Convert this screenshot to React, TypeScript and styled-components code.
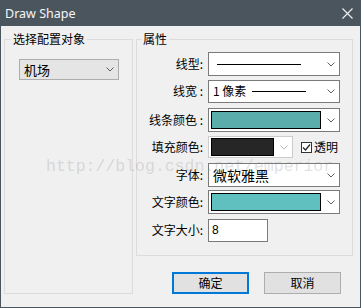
import React from "react";
import styled, { createGlobalStyle } from "styled-components";

const GlobalStyle = createGlobalStyle`
  html, body {
    margin: 0;
    padding: 0;
    background: #f0f0f0;
  }
  * {
    box-sizing: border-box;
  }
`;

const Window = styled.div`
  position: relative;
  width: 361px;
  height: 308px;
  background: #f0f0f0;
  border: 1px solid #4b555e;
  border-top: none;
  display: flex;
  flex-direction: column;
  font-family: "Noto Sans CJK SC", "Noto Sans", sans-serif;
  font-size: 12px;
  color: #000;
  overflow: hidden;
`;

const TitleBar = styled.div`
  height: 26px;
  flex: none;
  margin: 0 -1px;
  background: #4b555e;
  display: flex;
  align-items: center;
  justify-content: space-between;
  padding: 0 8px 0 5px;
  color: #f4f6f8;
  font-family: "Noto Sans", "Open Sans", sans-serif;
  font-size: 12.5px;
`;

const Body = styled.div`
  flex: 1;
  display: grid;
  grid-template-columns: 129px 217px;
  column-gap: 3px;
  align-items: start;
  padding: 5px 7px 0 3px;
`;

const Group = styled.fieldset<{ $height: number }>`
  margin: 0;
  padding: 0;
  min-width: 0;
  height: ${(p) => p.$height}px;
  border: 1px solid #dcdcdc;
`;

const Legend = styled.legend<{ $offset: number }>`
  margin-left: ${(p) => p.$offset}px;
  padding: 0 2px;
  font-size: 12px;
  line-height: 16px;
`;

const LeftContent = styled.div`
  padding: 12px 0 0 14px;
`;

const RightColumn = styled.div`
  display: flex;
  flex-direction: column;
`;

const Form = styled.div`
  display: flex;
  flex-direction: column;
  padding-top: 5px;
`;

const Row = styled.div<{ $gap?: number }>`
  display: grid;
  grid-template-columns: 66px auto auto;
  column-gap: 5px;
  align-items: center;
  justify-content: start;
  height: 24px;
  margin-top: ${(p) => p.$gap ?? 0}px;
`;

const Label = styled.div`
  text-align: right;
  white-space: pre;
  line-height: 16px;
`;

const Combo = styled.div<{ $width: number; $height?: number; $grey?: boolean; $disabled?: boolean }>`
  width: ${(p) => p.$width}px;
  height: ${(p) => p.$height ?? 24}px;
  border: 1px solid ${(p) => (p.$disabled ? "#cccccc" : p.$grey ? "#adadad" : "#7a7a7a")};
  background: ${(p) => (p.$grey ? "#e5e5e5" : "#fff")};
  display: flex;
  align-items: center;
  padding: 0 4px 0 2px;
  gap: 4px;
`;

const ComboValue = styled.div`
  flex: 1;
  display: flex;
  align-items: center;
  min-width: 0;
  height: 100%;
`;

const ComboText = styled.span<{ $size?: number }>`
  padding-left: 2px;
  font-size: ${(p) => p.$size ?? 12}px;
  line-height: 16px;
`;

const LineSample = styled.div<{ $width: number; $left?: number }>`
  width: ${(p) => p.$width}px;
  height: 1px;
  margin-left: ${(p) => p.$left ?? 6}px;
  background: #000;
`;

const Swatch = styled.div<{ $color: string; $width: number; $height: number }>`
  width: ${(p) => p.$width}px;
  height: ${(p) => p.$height}px;
  background: ${(p) => p.$color};
  border: 1px solid #000;
`;

const Check = styled.label`
  display: flex;
  align-items: center;
  gap: 2px;
  margin-left: 3px;
  line-height: 16px;
`;

const CheckBox = styled.span`
  width: 11px;
  height: 11px;
  border: 1px solid #333;
  background: #fff;
  display: flex;
  align-items: center;
  justify-content: center;
`;

const TextInput = styled.div`
  width: 60px;
  height: 23px;
  border: 1px solid #7a7a7a;
  background: #fff;
  display: flex;
  align-items: center;
  padding-left: 3px;
  font-family: "Liberation Sans", sans-serif;
  font-size: 12px;
`;

const Buttons = styled.div`
  display: flex;
  justify-content: flex-end;
  gap: 15px;
  margin-top: 16px;
  padding-right: 12px;
`;

const Button = styled.button<{ $primary?: boolean }>`
  width: 77px;
  height: 22px;
  padding: 0;
  background: #e1e1e1;
  border: ${(p) => (p.$primary ? "2px solid #0078d7" : "1px solid #adadad")};
  font-family: "Noto Sans CJK SC", sans-serif;
  font-size: 12px;
  line-height: 16px;
  color: #000;
`;

// faint blog watermark lying over the dialog
const Watermark = styled.div`
  position: absolute;
  left: 45px;
  top: 157px;
  font-family: "Liberation Mono", monospace;
  font-size: 16.5px;
  line-height: 19px;
  color: rgba(140, 140, 140, 0.27);
  pointer-events: none;
  white-space: nowrap;
`;

const Chevron = ({ light }: { light?: boolean }) => (
  <svg width="8" height="5" viewBox="0 0 8 5">
    <polyline points="0.5,0.5 4,4 7.5,0.5" fill="none" stroke={light ? "#b8b8b8" : "#606060"} strokeWidth="1" />
  </svg>
);

const CloseIcon = () => (
  <svg width="11" height="11" viewBox="0 0 11 11">
    <path d="M0.5 0.5 L10.5 10.5 M10.5 0.5 L0.5 10.5" stroke="#f0f2f4" strokeWidth="1.1" />
  </svg>
);

export default function App() {
  return (
    <>
      <GlobalStyle />
      <Window>
        <TitleBar>
          <span>Draw Shape</span>
          <CloseIcon />
        </TitleBar>
        <Body>
          <Group $height={263}>
            <Legend $offset={6}>选择配置对象</Legend>
            <LeftContent>
              <Combo $width={100} $height={21} $grey>
                <ComboValue>
                  <ComboText $size={13}>机场</ComboText>
                </ComboValue>
                <Chevron />
              </Combo>
            </LeftContent>
          </Group>

          <RightColumn>
            <Group $height={225}>
              <Legend $offset={4}>属性</Legend>
              <Form>
                <Row>
                  <Label>线型:</Label>
                  <Combo $width={132}>
                    <ComboValue>
                      <LineSample $width={84} $left={6} />
                    </ComboValue>
                    <Chevron />
                  </Combo>
                </Row>
                <Row $gap={3}>
                  <Label>线宽 :</Label>
                  <Combo $width={132} $height={23}>
                    <ComboValue>
                      <ComboText>1 像素</ComboText>
                      <LineSample $width={54} $left={6} />
                    </ComboValue>
                    <Chevron />
                  </Combo>
                </Row>
                <Row $gap={5}>
                  <Label>线条颜色 :</Label>
                  <Combo $width={132}>
                    <ComboValue>
                      <Swatch $color="#5aadab" $width={110} $height={18} />
                    </ComboValue>
                    <Chevron />
                  </Combo>
                </Row>
                <Row $gap={3}>
                  <Label>填充颜色:</Label>
                  <Combo $width={85} $height={22} $disabled>
                    <ComboValue>
                      <Swatch $color="#262626" $width={63} $height={18} />
                    </ComboValue>
                    <Chevron light />
                  </Combo>
                  <Check>
                    <CheckBox>
                      <svg width="9" height="9" viewBox="0 0 9 9">
                        <polyline points="1,4.5 3.5,7 8,1.5" fill="none" stroke="#222" strokeWidth="1.2" />
                      </svg>
                    </CheckBox>
                    透明
                  </Check>
                </Row>
                <Row $gap={4}>
                  <Label>字体:</Label>
                  <Combo $width={132}>
                    <ComboValue>
                      <ComboText $size={14}>微软雅黑</ComboText>
                    </ComboValue>
                    <Chevron />
                  </Combo>
                </Row>
                <Row $gap={3}>
                  <Label>文字颜色:</Label>
                  <Combo $width={132}>
                    <ComboValue>
                      <Swatch $color="#60c0c0" $width={110} $height={18} />
                    </ComboValue>
                    <Chevron />
                  </Combo>
                </Row>
                <Row $gap={4}>
                  <Label>文字大小:</Label>
                  <TextInput>8</TextInput>
                </Row>
              </Form>
            </Group>
            <Buttons>
              <Button $primary>确定</Button>
              <Button>取消</Button>
            </Buttons>
          </RightColumn>
        </Body>
        <Watermark>http://blog.csdn.net/emperior</Watermark>
      </Window>
    </>
  );
}
